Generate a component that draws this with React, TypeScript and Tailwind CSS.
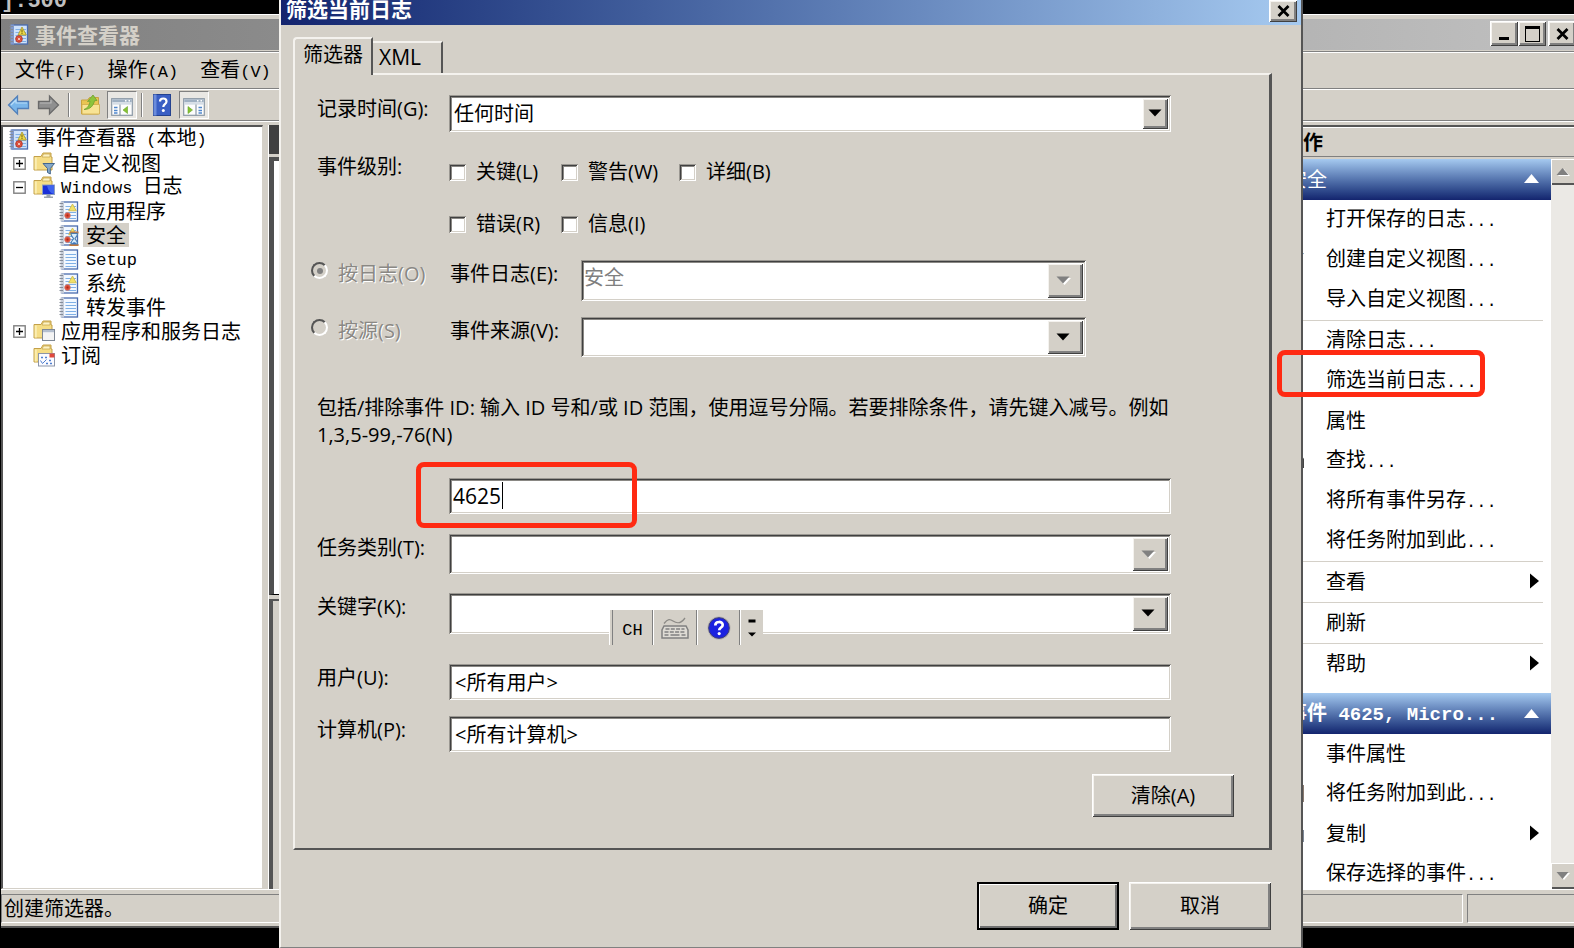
import type { ReactNode } from "react";

const sunken =
  "bg-white shadow-[inset_1px_1px_0_#9b9892,inset_-1px_-1px_0_#ffffff,inset_2px_2px_0_#404040,inset_-2px_-2px_0_#d4d0c8,inset_3px_3px_0_#8a8884]";
const raised =
  "bg-[#d4d0c8] shadow-[inset_1px_1px_0_#ffffff,inset_-1px_-1px_0_#404040,inset_2px_2px_0_#f4f2ee,inset_-3px_-3px_0_#808080]";
const song = "font-['Noto_Sans_CJK_SC',sans-serif] text-[20px]";
const yahei = "font-['Open_Sans','Noto_Sans_CJK_SC',sans-serif] text-[20px]";

/* Mixed Chinese and half-width Latin text. */
function Song({ text, bold = false }: { text: string; bold?: boolean }) {
  const parts = text.split(/([\x20-\x7e]+)/).filter(Boolean);
  return (
    <span className="whitespace-pre">
      {parts.map((p, i) =>
        /^[\x20-\x7e]/.test(p) ? (
          <span
            key={i}
            className={
              bold
                ? "font-['Liberation_Mono',monospace] text-[19px]"
                : "font-['Liberation_Mono',monospace] text-[17px]"
            }
          >
            {p}
          </span>
        ) : (
          p
        ),
      )}
    </span>
  );
}

/* ---------- icons ---------- */

function LogBook({ kind = "alert" }: { kind?: "alert" | "plain" | "root" | "busy" }) {
  const root = kind === "root";
  return (
    <svg width="20" height="21" viewBox="0 0 20 21" className="shrink-0">
      <rect x="3" y="1" width="15.500" height="19" fill={root ? "#cfe2fa" : "#f2f8ff"} stroke="#4a6cae" strokeWidth="1.300" />
      <rect x="1.500" y="0.500" width="3.500" height="20" fill={root ? "#7f98cc" : "#c5ccd8"} />
      {[2, 5, 8, 11, 14, 17].map((y) => (
        <rect key={y} x="0.500" y={y} width="3.500" height="1" fill="#858c98" />
      ))}
      {[5, 8, 11, 14, 17].map((y) => (
        <rect key={y} x="6.500" y={y} width="10.500" height="1" fill="#7fb0e6" />
      ))}
      {kind !== "plain" && !root && (
        <>
          <path d="M13.500 3l3.800 6.800H9.700z" fill="#f1e069" stroke="#cdb945" strokeWidth="0.800" />
          <circle cx="8.500" cy="14.500" r="2.900" fill="#dc4a36" stroke="#c98a80" strokeWidth="0.700" />
          <circle cx="8.500" cy="14.500" r="1" fill="#a82a1a" />
        </>
      )}
      {root && (
        <>
          <path d="M13 3l4.300 8H9z" fill="#ecd94a" stroke="#a8942a" strokeWidth="0.800" />
          <path d="M13 5.500v3M13 9v1" stroke="#6b5c10" strokeWidth="1" />
          <circle cx="10" cy="15" r="3.400" fill="#dc4a36" stroke="#a8362a" strokeWidth="0.700" />
          <path d="M8.800 13.800l2.400 2.400M11.200 13.800l-2.400 2.400" stroke="#f4c8c0" strokeWidth="0.900" />
        </>
      )}
      {kind === "busy" && (
        <>
          <path d="M10.500 7.500h9M10.500 20h9" stroke="#c4793e" strokeWidth="1.800" />
          <path d="M12 8.400h6.500c0 3-2 4-2.500 5.300 .5 1.300 2.500 2.300 2.500 5.300H12c0-3 2-4 2.500-5.300-.5-1.300-2.500-2.300-2.500-5.300z" fill="#d8ecfb" stroke="#4a7cb0" strokeWidth="1.100" />
          <path d="M13 19c.3-2.200 4.200-2.200 4.500 0z" fill="#3f78c0" />
        </>
      )}
    </svg>
  );
}

function Folder({ kind }: { kind: "filter" | "screen" | "window" | "subscribe" }) {
  return (
    <svg width="22" height="23" viewBox="0 0 22 23" className="shrink-0">
      <path d="M1 4.500h7l2-3.500h8v4h1v13H1z" fill="#f5dd86" stroke="#c3a049" strokeWidth="1" />
      <path d="M10.500 2h6.500v3h-8z" fill="#fdf3c4" stroke="#c3a049" strokeWidth="0.700" />
      <path d="M1.800 5.500h2v12h-2z" fill="#fbeeb2" />
      {kind === "filter" && (
        <path d="M10 11.500h11.500l-4.200 5v5.500l-2.800-1.500v-4z" fill="#86a9c9" stroke="#44678c" strokeWidth="1" />
      )}
      {kind === "screen" && (
        <>
          <rect x="9.500" y="9" width="12" height="9.500" fill="#1a30d8" stroke="#8a9cc0" strokeWidth="1" />
          <path d="M14 9.500h7v8.500c-4-1-6-4-7-8.500z" fill="#3f63ee" />
          <path d="M13.500 19h4v1.500h2.500v1.500h-9v-1.500h2.500z" fill="#9ba3ad" />
        </>
      )}
      {kind === "window" && (
        <>
          <rect x="9.500" y="9.500" width="12" height="11" fill="#f4f4f4" stroke="#7e8794" strokeWidth="1" />
          <rect x="10" y="10" width="11" height="2.200" fill="#b4bfcf" />
        </>
      )}
      {kind === "subscribe" && (
        <>
          <rect x="5.500" y="9.500" width="16" height="12.500" fill="#fbfbff" stroke="#8c95a8" strokeWidth="1" />
          <rect x="16.500" y="9.500" width="5" height="4" fill="#e0483c" />
          <path d="M8 13.500h2M12 13.500h2M16 16.500h2M13 19.500h2M17 19.500h2" stroke="#4f7fcf" strokeWidth="1.600" />
          <path d="M7.500 16.500l2 3 4-4" stroke="#4f7fcf" strokeWidth="1" fill="none" />
        </>
      )}
    </svg>
  );
}

function Expander({ open }: { open: boolean }) {
  return (
    <svg width="13" height="13" viewBox="0 0 13 13" className="shrink-0">
      <rect x="0.800" y="0.800" width="11.400" height="11.400" fill="#fff" stroke="#808080" strokeWidth="1.400" />
      <path d={open ? "M3 6.500h7" : "M3 6.500h7M6.500 3v7"} stroke="#000" strokeWidth="1.300" />
    </svg>
  );
}

function ArrowIcon({ forward = false }: { forward?: boolean }) {
  return forward ? (
    <svg width="23" height="22" viewBox="0 0 23 22">
      <path d="M1.500 7.500h11V2l9 9-9 9v-5.500h-11z" fill="#8f8f8f" stroke="#6a6a6a" strokeWidth="1.300" />
      <path d="M3 9h11V6" stroke="#b9b9b9" strokeWidth="1.200" fill="none" />
    </svg>
  ) : (
    <svg width="23" height="22" viewBox="0 0 23 22">
      <path d="M21.500 7.500h-11V2l-9 9 9 9v-5.500h11z" fill="#7ab6ea" stroke="#5280ba" strokeWidth="1.300" />
      <path d="M20 9H9V6l-5 5" stroke="#b8dcf8" strokeWidth="1.200" fill="none" />
    </svg>
  );
}

function OpenFolder() {
  return (
    <svg width="21" height="22" viewBox="0 0 21 22">
      <path d="M1.500 6h6l2-2.500h9v16.500h-17z" fill="#e9c552" stroke="#c8a340" />
      <path d="M2 10.500h17.500v9.500H2z" fill="#f8e394" stroke="#d0ac4a" strokeWidth="0.800" />
      <path d="M4 15.500C8 14 9.500 11 10 7L7.500 7.500 13 1l4 5.500-2.500.2C13.500 11.500 10.500 15.500 4 15.500z" fill="#8cc43c" stroke="#6da030" strokeWidth="0.800" />
    </svg>
  );
}

function PaneIcon({ side }: { side: "left" | "right" }) {
  const left = side === "left";
  return (
    <svg width="22" height="18" viewBox="0 0 22 18" className="mt-1">
      <rect x="0.700" y="0.700" width="20.600" height="16.600" fill="#fdfdfd" stroke="#8b98a6" strokeWidth="1.200" />
      <rect x="1.300" y="1.300" width="19.400" height="3" fill="#9fb0c2" />
      <path d="M14 2.800h1.500M17.500 2.800H19" stroke="#fff" strokeWidth="1.400" />
      <rect x="1.300" y="4.300" width="19.400" height="2.400" fill="#d5dde6" />
      <path d={left ? "M9 6.500v11" : "M13 6.500v11"} stroke="#8b98a6" strokeWidth="1.200" />
      <path
        d={left ? "M3 9.500h3.500M3 12.500h3.500M3 15h3.500" : "M15.500 9.500H19M15.500 12.500H19M15.500 15H19"}
        stroke="#4f86cc"
        strokeWidth="1.500"
      />
      <path d={left ? "M16.500 8.500v7l-4.500-3.500z" : "M5 8.500v7l4.500-3.500z"} fill="#86c232" stroke="#6aa42a" strokeWidth="0.600" />
    </svg>
  );
}

function HelpBook() {
  return (
    <svg width="18" height="22" viewBox="0 0 18 22">
      <rect x="0.500" y="0.500" width="17" height="21" fill="#3a5fc4" stroke="#24428f" />
      <rect x="0.500" y="0.500" width="3" height="21" fill="#6b8cdc" />
      <path d="M7 7.500c0-4 6.500-4 6.500 0 0 2.700-3.200 2.700-3.200 5.500" stroke="#fff" strokeWidth="2.200" fill="none" />
      <circle cx="10.300" cy="16.500" r="1.500" fill="#fff" />
    </svg>
  );
}

function CloseGlyph() {
  return (
    <svg width="13" height="12" viewBox="0 0 13 12">
      <path d="M1.500 1l10 10M11.500 1l-10 10" stroke="#000" strokeWidth="2.800" />
    </svg>
  );
}

function DropGlyph({ disabled = false }: { disabled?: boolean }) {
  return (
    <svg width="15" height="9" viewBox="0 0 15 9">
      {disabled && <path d="M2 2h13L8.500 9z" fill="#fff" />}
      <path d="M0.500 0.500h13L7 7.500z" fill={disabled ? "#808080" : "#000"} />
    </svg>
  );
}

function ScrollGlyph({ down = false }: { down?: boolean }) {
  return (
    <svg width="14" height="10" viewBox="0 0 14 10">
      <path d={down ? "M2 2h12L8 9z" : "M2 9h12L8 2z"} fill="#fff" />
      <path d={down ? "M0.500 1h12l-6 7z" : "M0.500 8h12l-6-7z"} fill="#808080" />
    </svg>
  );
}

function Keyboard() {
  return (
    <svg width="28" height="22" viewBox="0 0 28 22">
      <path d="M3 6.500c4-5 6-4.500 9-2.500s7 4 12-3" stroke="#8c8a86" strokeWidth="1.300" fill="none" />
      <path d="M3 9h22l2 4v8H1v-8z" fill="#dedbd4" stroke="#808080" strokeWidth="1.500" />
      <path d="M4.500 12h19M3.500 15h21" stroke="#808080" strokeWidth="1.400" strokeDasharray="4 1.300" />
      <path d="M3.500 18h4M9.500 18h9M20.500 18h4" stroke="#808080" strokeWidth="1.600" />
    </svg>
  );
}

function HelpBall() {
  return (
    <svg width="24" height="24" viewBox="0 0 24 24">
      <circle cx="12" cy="12" r="11.500" fill="#b4b0ac" />
      <circle cx="12" cy="12" r="10.300" fill="#1c22e0" stroke="#3a3a80" strokeWidth="1" />
      <path d="M8.300 9.500c0-4.800 7.400-4.400 7.400-.6 0 2.600-3.500 2.600-3.500 5.300" stroke="#fff" strokeWidth="2.700" fill="none" />
      <circle cx="12.200" cy="17.600" r="1.600" fill="#fff" />
    </svg>
  );
}

/* ---------- tree ---------- */

function TreeRow({
  label,
  icon,
  level,
  expander,
  selected = false,
}: {
  label: string;
  icon: ReactNode;
  level: 0 | 1 | 2;
  expander?: boolean;
  selected?: boolean;
}) {
  const indent = level === 0 ? "pl-1.5" : level === 1 ? "pl-2.5" : "pl-14";
  return (
    <li className={`flex h-6 items-center leading-6 ${indent}`}>
      {level === 1 && (
        <span className="flex w-5 shrink-0">{expander !== undefined && <Expander open={expander} />}</span>
      )}
      {icon}
      <span className={level === 1 ? "ml-1.5 pr-1" : selected ? "ml-1 bg-[#d4d0c8] px-[3px]" : "ml-[7px]"}>
        <Song text={label} />
      </span>
    </li>
  );
}

/* ---------- actions pane ---------- */

function SectionHeader({ text, bold = false }: { text: string; bold?: boolean }) {
  return (
    <button
      type="button"
      className={`flex h-[41px] w-full shrink-0 items-center justify-between bg-linear-to-b from-[#a6caf0] to-[#14246e] px-3 text-left text-white ${bold ? "font-bold" : "pb-0.5"}`}
    >
      <Song text={text} bold={bold} />
      <svg width="15" height="9" viewBox="0 0 15 9">
        <path d="M0 9h15L7.500 0z" fill="#fff" />
      </svg>
    </button>
  );
}

function Action({ text, sub = false, icon }: { text: string; sub?: boolean; icon?: ReactNode }) {
  return (
    <li className="shrink-0">
      <button type="button" className="flex h-10 w-full items-center pr-3 pb-0.5 pl-2.5 text-left">
        <span className="flex w-[41px] shrink-0">{icon}</span>
        <span className="grow">
          <Song text={text} />
        </span>
        {sub && (
          <svg width="9" height="16" viewBox="0 0 9 16">
            <path d="M0 0.500v15L9 8z" fill="#000" />
          </svg>
        )}
      </button>
    </li>
  );
}

function Rule() {
  return <li className="mr-2 h-px shrink-0 bg-[#d4d0c8]" />;
}

const smallIcon = (d: string, fill: string) => (
  <svg width="20" height="20" viewBox="0 0 20 20">
    <path d={d} fill={fill} />
  </svg>
);

/* ---------- dialog parts ---------- */

function Combo({
  id,
  value = "",
  disabled = false,
  grayArrow = false,
  wide = true,
  height,
  pad = "pl-1",
}: {
  id: string;
  value?: string;
  disabled?: boolean;
  grayArrow?: boolean;
  wide?: boolean;
  height: string;
  pad?: string;
}) {
  return (
    <div className={`relative min-w-0 grow p-[3px] ${sunken} ${height}`}>
      <select
        id={id}
        defaultValue={value}
        disabled={disabled}
        className={`block h-full w-full appearance-none bg-transparent opacity-100 outline-none ${pad} ${disabled ? "pb-1.5 text-[#808080]" : "text-black"}`}
      >
        <option value={value}>{value}</option>
      </select>
      <span
        className={`pointer-events-none absolute inset-y-[3px] right-[3px] flex items-center justify-center ${raised} ${wide ? "w-9 pr-1" : "w-[26px]"}`}
      >
        <DropGlyph disabled={grayArrow} />
      </span>
    </div>
  );
}

function Check({ label }: { label: string }) {
  return (
    <label className="flex h-7 items-center gap-2.5">
      <input type="checkbox" className={`size-[17px] shrink-0 appearance-none ${sunken}`} />
      {label}
    </label>
  );
}

function Radio({ label, checked = false }: { label: string; checked?: boolean }) {
  return (
    <label className="flex h-7 w-[139px] shrink-0 items-start gap-2.5 leading-7 text-[#8a8884] [text-shadow:1px_1px_0_#fff]">
      <input
        type="radio"
        name="by"
        disabled
        defaultChecked={checked}
        className="mt-0.5 flex size-[17px] shrink-0 appearance-none items-center justify-center rounded-full border-2 border-t-[#555] border-r-white border-b-white border-l-[#555] before:size-[6px] before:rounded-full checked:before:bg-[#808080]"
      />
      {label}
    </label>
  );
}

function Field({ id, label, children, className }: { id: string; label: string; children: ReactNode; className: string }) {
  return (
    <div className={`flex items-start pr-[98px] pl-[22px] ${className}`}>
      <label htmlFor={id} className="w-[132px] shrink-0 leading-7">
        {label}
      </label>
      {children}
    </div>
  );
}

function FilterDialog() {
  return (
    <section
      className={`absolute top-0 right-[271px] left-[279px] flex h-full min-h-[948px] flex-col border-r-2 border-b border-l-2 border-r-[#555] border-b-[#808080] border-l-[#f4f2ee] bg-[#d4d0c8] ${yahei}`}
    >
      <header className="flex h-[25px] shrink-0 items-start justify-between overflow-hidden bg-linear-to-r from-[#14246e] to-[#a6caf0] pl-[5px] text-white">
        <h2 className="h-5 text-[21px] leading-[18px] font-bold">筛选当前日志</h2>
        <button type="button" aria-label="关闭" className={`mr-1 flex h-[22px] w-7 items-center justify-center ${raised}`}>
          <CloseGlyph />
        </button>
      </header>

      <div className="flex grow flex-col pt-3 pr-[29px] pl-3">
        <div className="flex items-end" role="tablist">
          <button
            type="button"
            role="tab"
            aria-selected="true"
            className="z-10 -mb-0.5 flex h-[38px] w-20 items-start justify-center rounded-tl-sm border-t-2 border-r-2 border-l-2 border-t-[#f4f2ee] border-r-[#555] border-l-[#f4f2ee] bg-[#d4d0c8] pt-0.5 leading-7"
          >
            筛选器
          </button>
          <button
            type="button"
            role="tab"
            aria-selected="false"
            className="flex h-8 w-[70px] items-center border-t-2 border-r-2 border-t-[#f4f2ee] border-r-[#555] pl-1.5 text-[21px]"
          >
            XML
          </button>
        </div>

        <form className="flex flex-col border-t-2 border-r-3 border-b-2 border-l-2 border-t-[#f4f2ee] border-r-[#555] border-b-[#555] border-l-[#f4f2ee] pb-[31px]">
          <Field id="time" label="记录时间(G):" className="mt-5">
            <Combo id="time" value="任何时间" height="h-[37px]" wide={false} pad="pl-0.5" />
          </Field>

          <fieldset className="mt-[21px] flex items-start pl-[22px]">
            <span className="w-[132px] shrink-0 leading-7">事件级别:</span>
            <div className="grid grid-cols-[112px_118px_auto] gap-y-6 pt-[5px]">
              <Check label="关键(L)" />
              <Check label="警告(W)" />
              <Check label="详细(B)" />
              <Check label="错误(R)" />
              <Check label="信息(I)" />
            </div>
          </fieldset>

          <div className="mt-[22px] flex items-start pr-[183px] pl-4">
            <Radio label="按日志(O)" checked />
            <label htmlFor="log" className="w-[131px] shrink-0 leading-7">
              事件日志(E):
            </label>
            <Combo id="log" value="安全" disabled grayArrow height="h-[41px]" pad="pl-0" />
          </div>
          <div className="mt-4 flex items-start pr-[183px] pl-4">
            <Radio label="按源(S)" />
            <label htmlFor="source" className="w-[131px] shrink-0 leading-7">
              事件来源(V):
            </label>
            <Combo id="source" height="h-10" />
          </div>

          <label htmlFor="ids" className="mt-[37px] block pr-20 pl-[22px] leading-[27px]">
            包括/排除事件 ID: 输入 ID 号和/或 ID 范围，使用逗号分隔。若要排除条件，请先键入减号。例如 1,3,5-99,-76(N)
          </label>
          <div className="relative mt-[30px] flex pr-[98px] pl-[154px]">
            <input id="ids" type="text" defaultValue="4625" className={`h-9 min-w-0 grow pl-1 text-[21px] outline-none ${sunken}`} />
            <span className="absolute top-1 left-[207px] h-[27px] w-px bg-black" />
            <span className="absolute -top-4 left-[121px] h-[66px] w-[221px] rounded-lg border-5 border-[#ff2a12]" />
          </div>

          <Field id="task" label="任务类别(T):" className="mt-5">
            <Combo id="task" grayArrow height="h-10" />
          </Field>
          <Field id="keyword" label="关键字(K):" className="mt-[19px]">
            <Combo id="keyword" height="h-[41px]" />
          </Field>
          <Field id="user" label="用户(U):" className="mt-[30px]">
            <input id="user" type="text" defaultValue="<所有用户>" className={`h-9 min-w-0 grow pb-0.5 pl-1.5 outline-none ${sunken}`} />
          </Field>
          <Field id="computer" label="计算机(P):" className="mt-4">
            <input id="computer" type="text" defaultValue="<所有计算机>" className={`h-9 min-w-0 grow pb-0.5 pl-1.5 outline-none ${sunken}`} />
          </Field>
          <button type="button" className={`mt-[22px] mr-[35px] h-[43px] w-[142px] self-end ${raised}`}>
            清除(A)
          </button>
        </form>

        <footer className="mt-8 flex justify-end gap-2.5 pr-px">
          <button type="button" className="h-12 w-[142px] border-2 border-black bg-[#d4d0c8] shadow-[inset_1px_1px_0_#fff,inset_-2px_-2px_0_#707070]">
            确定
          </button>
          <button type="button" className={`h-12 w-[142px] ${raised}`}>
            取消
          </button>
        </footer>
      </div>

      <div className={`absolute top-[610px] left-[328px] flex h-[35px] w-[154px] items-stretch bg-[#d4d0c8] ${song}`}>
        <span className="w-1 border-r border-l border-r-[#808080] border-l-white" />
        <button type="button" className="flex w-10 items-center justify-center border-r border-[#808080]">
          <Song text="CH" />
        </button>
        <button type="button" aria-label="键盘" className="flex w-11 items-center justify-center border-r border-l border-r-[#808080] border-l-white">
          <Keyboard />
        </button>
        <button type="button" aria-label="帮助" className="flex w-[43px] items-center justify-center border-r border-l border-r-[#808080] border-l-white">
          <HelpBall />
        </button>
        <button type="button" aria-label="选项" className="flex grow items-center justify-center border-l border-white">
          <svg width="8" height="18" viewBox="0 0 8 18">
            <path d="M0.500 0.500h7v3h-7zM0 13.500h8l-4 4z" fill="#000" />
          </svg>
        </button>
      </div>
    </section>
  );
}

export default function App() {
  return (
    <div className={`relative flex h-screen min-h-[948px] w-full flex-col overflow-hidden bg-black pl-px text-black ${song}`}>
      <div className="flex h-3.5 shrink-0 overflow-hidden font-['Liberation_Mono',monospace] text-[22px] leading-[4px] font-bold text-[#c0c0c0]">
        <span>]:500</span>
        <span className="ml-[198px]">*</span>
      </div>

      <main className="flex min-h-0 grow flex-col border-t border-b-2 border-t-white border-b-[#555] bg-[#d4d0c8]">
        <header className="mt-1 flex h-[31px] shrink-0 items-center bg-linear-to-r from-[#808080] to-[#c0c0c0] pl-2">
          <LogBook kind="root" />
          <h1 className="ml-1.5 grow pb-0.5 text-[21px] leading-7 font-bold text-[#d4d0c8]">事件查看器</h1>
          <div className="-mr-0.5 flex pb-0.5">
            <button type="button" aria-label="最小化" className={`flex h-[25px] w-7 items-end justify-center pb-1.5 ${raised}`}>
              <span className="h-[3px] w-2.5 bg-black" />
            </button>
            <button type="button" aria-label="最大化" className={`flex h-[25px] w-7 items-center justify-center ${raised}`}>
              <span className="h-4 w-[15px] border border-t-3 border-black" />
            </button>
            <button type="button" aria-label="关闭" className={`ml-0.5 flex h-[25px] w-7 items-center justify-center ${raised}`}>
              <CloseGlyph />
            </button>
          </div>
        </header>

        <nav className="mt-px flex h-[38px] shrink-0 items-center gap-[22px] border-t border-b border-[#808080] pl-3.5 shadow-[inset_0_1px_0_#fff]">
          <button type="button"><Song text="文件(F)" /></button>
          <button type="button"><Song text="操作(A)" /></button>
          <button type="button"><Song text="查看(V)" /></button>
        </nav>

        <div className="flex h-8 shrink-0 items-center border-b border-[#808080] pl-1.5 shadow-[inset_0_1px_0_#fff,0_1px_0_#fff]">
          <button type="button" aria-label="后退"><ArrowIcon /></button>
          <button type="button" aria-label="前进" className="ml-[7px]"><ArrowIcon forward /></button>
          <span className="ml-2 h-6 w-0.5 border-r border-l border-r-white border-l-[#808080]" />
          <button type="button" aria-label="打开" className="ml-2.5"><OpenFolder /></button>
          <button type="button" aria-label="控制台树" className="ml-1.5 flex h-7 w-[30px] items-center justify-center border border-t-[#808080] border-r-white border-b-white border-l-[#808080] bg-[#e9e7e3]">
            <PaneIcon side="left" />
          </button>
          <span className="ml-1 h-6 w-0.5 border-r border-l border-r-white border-l-[#808080]" />
          <button type="button" aria-label="帮助" className="ml-2.5"><HelpBook /></button>
          <button type="button" aria-label="操作窗格" className="ml-2 flex h-7 w-[30px] items-center justify-center border border-t-[#808080] border-r-white border-b-white border-l-[#808080] bg-[#e9e7e3]">
            <PaneIcon side="right" />
          </button>
        </div>

        <div className="mt-1 flex min-h-0 grow">
          <ul className="w-[262px] shrink-0 border-t-2 border-r border-b border-l-2 border-t-[#555] border-r-[#d4d0c8] border-b-[#d4d0c8] border-l-[#555] bg-white">
            <TreeRow level={0} label="事件查看器 (本地)" icon={<LogBook kind="root" />} />
            <TreeRow level={1} expander={false} label="自定义视图" icon={<Folder kind="filter" />} />
            <TreeRow level={1} expander label="Windows 日志" icon={<Folder kind="screen" />} />
            <TreeRow level={2} label="应用程序" icon={<LogBook />} />
            <TreeRow level={2} label="安全" icon={<LogBook kind="busy" />} selected />
            <TreeRow level={2} label="Setup" icon={<LogBook kind="plain" />} />
            <TreeRow level={2} label="系统" icon={<LogBook />} />
            <TreeRow level={2} label="转发事件" icon={<LogBook kind="plain" />} />
            <TreeRow level={1} expander={false} label="应用程序和服务日志" icon={<Folder kind="window" />} />
            <TreeRow level={1} label="订阅" icon={<Folder kind="subscribe" />} />
          </ul>

          <div className="ml-[5px] flex min-w-0 grow flex-col border-l border-white">
            <div className="h-[29px] shrink-0 bg-[#404040]" />
            <div className="mt-[3px] h-[438px] shrink-0 border-t-4 border-b border-l-5 border-[#505050] border-b-black bg-white" />
            <div className="mt-1 grow border-t-2 border-l-4 border-[#555]" />
          </div>

          <aside className="flex w-[299px] shrink-0 flex-col border-t-2 border-[#555]">
            <h2 className="flex h-[30px] shrink-0 items-center border-t border-b border-t-white border-b-[#808080] pl-2 font-bold">操作</h2>
            <div className="mt-0.5 flex min-h-0 grow overflow-hidden">
              <div className="flex min-w-0 grow flex-col overflow-hidden bg-white">
                <SectionHeader text="安全" />
                <ul className="flex shrink-0 flex-col pb-[9px]">
                  <Action text="打开保存的日志..." />
                  <Action text="创建自定义视图..." icon={smallIcon("M4 4h15l-5 7v7l-4-2v-5z", "#5f84a8")} />
                  <Action text="导入自定义视图..." />
                  <Rule />
                  <Action text="清除日志..." />
                  <Action text="筛选当前日志..." />
                  <Action text="属性" />
                  <Action text="查找..." icon={smallIcon("M2 18V9l4-6h3v6h3V3h3l4 6v9h-7v-6H9v6z", "#444")} />
                  <Action text="将所有事件另存..." />
                  <Action text="将任务附加到此..." />
                  <Rule />
                  <Action text="查看" sub />
                  <Rule />
                  <Action text="刷新" />
                  <Rule />
                  <Action text="帮助" sub />
                </ul>
                <SectionHeader text="事件 4625, Micro..." bold />
                <ul className="flex flex-col">
                  <Action text="事件属性" />
                  <Action text="将任务附加到此..." icon={smallIcon("M2 2h17v17H2z", "#8a7a70")} />
                  <Action text="复制" sub icon={smallIcon("M2 2h11v5h6v12H8v-4H2z", "#7d8796")} />
                  <Action text="保存选择的事件..." />
                </ul>
              </div>
              <div className="flex w-[23px] shrink-0 flex-col justify-between bg-[#ebe9e5]">
                <button type="button" aria-label="向上滚动" className="flex h-[26px] items-center justify-center bg-[#d4d0c8] shadow-[inset_1px_1px_0_#fff,inset_0_-2px_0_#555]">
                  <ScrollGlyph />
                </button>
                <button type="button" aria-label="向下滚动" className="flex h-[26px] items-center justify-center bg-[#d4d0c8] shadow-[inset_1px_1px_0_#fff,inset_0_-2px_0_#555]">
                  <ScrollGlyph down />
                </button>
              </div>
            </div>
          </aside>
        </div>

        <footer className="flex h-[37px] shrink-0 items-stretch gap-1 border-t border-white pt-1 pb-[3px]">
          <div className="flex grow items-center border-t border-r border-b border-l border-t-[#808080] border-r-white border-b-white border-l-[#808080] pb-0.5 pl-0.5 leading-6">
            创建筛选器。
          </div>
          <div className="w-[107px] border-t border-b border-l border-t-[#808080] border-b-white border-l-[#808080]" />
        </footer>
      </main>
      <div className="h-5 shrink-0" />

      <FilterDialog />
      <span className="pointer-events-none absolute top-[350px] right-[89px] h-[47px] w-[208px] rounded-lg border-5 border-[#ff2a12]" />
    </div>
  );
}
